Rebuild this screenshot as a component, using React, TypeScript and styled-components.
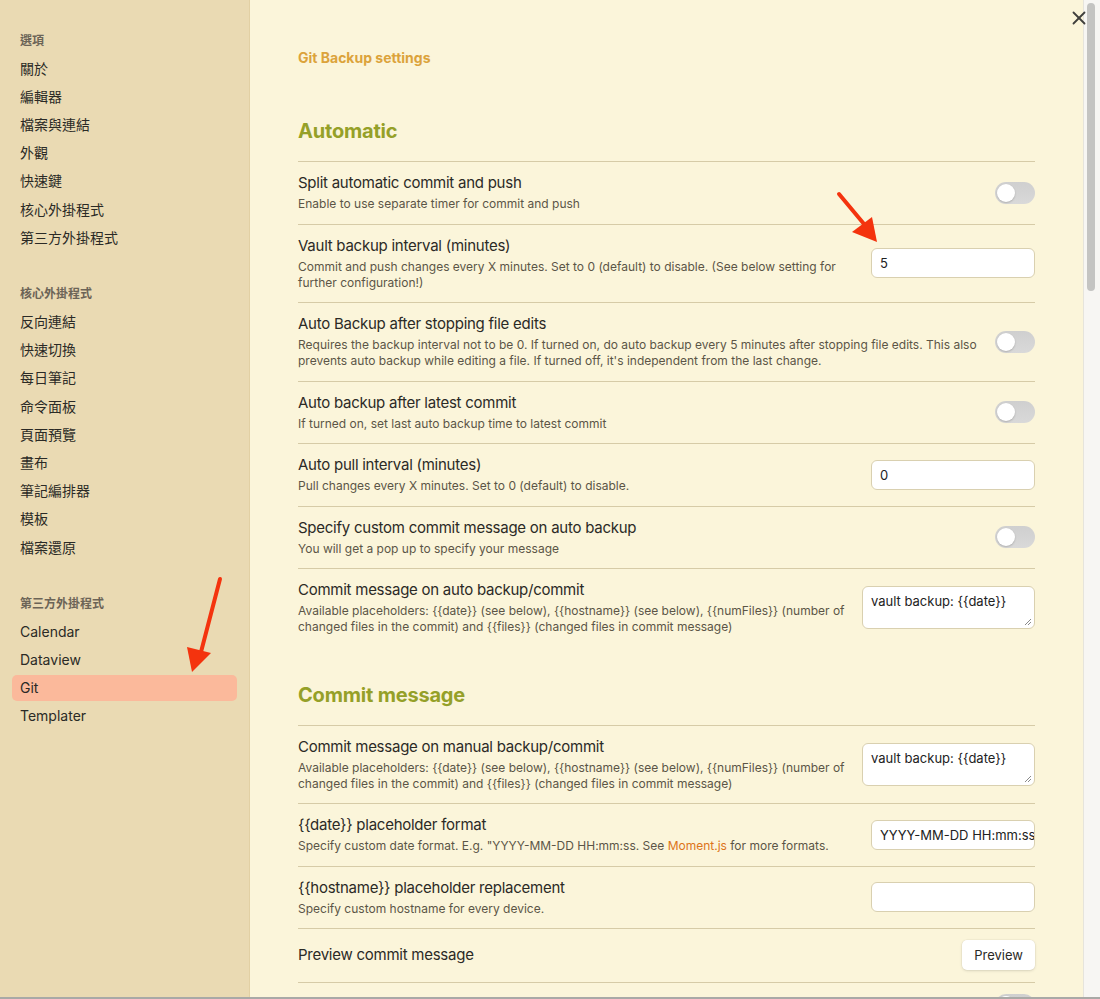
import React from "react";
import styled, { createGlobalStyle } from "styled-components";
import { X } from "lucide-react";

const GlobalStyle = createGlobalStyle`
  html, body { margin: 0; padding: 0; }
  body {
    font-family: Inter, "Noto Sans CJK TC", "Noto Sans", sans-serif;
    color: #2b2a26;
    background: #ffffff;
  }
  * { box-sizing: border-box; }
`;

const Window = styled.div`
  position: relative;
  display: flex;
  width: 1100px;
  height: 999px;
  overflow: hidden;
  border-bottom: 2px solid #a9a9a6;
`;

const Sidebar = styled.nav`
  flex: 0 0 250px;
  background: #eadab3;
  padding: 24.5px 12px 0 12px;
  border-right: 1px solid #e2d0a4;
`;

const NavGroup = styled.div`
  display: flex;
  flex-direction: column;
  margin-bottom: 25px;
`;

const NavHeading = styled.div`
  font-family: Inter, "Noto Sans CJK TC", sans-serif;
  font-size: 12px;
  font-weight: 600;
  line-height: 16px;
  padding: 8px 8px 7px;
  color: #6c6457;
`;

const NavItem = styled.div<{ $active?: boolean }>`
  font-family: Inter, "Noto Sans CJK TC", sans-serif;
  font-size: 14px;
  line-height: 18.2px;
  padding: 4px 8px;
  margin-bottom: 2px;
  border-radius: 5px;
  color: #2b2a26;
  background: ${(p) => (p.$active ? "#fbb99b" : "transparent")};
`;

const Main = styled.main`
  flex: 1;
  background: #fbf5da;
  padding: 48px 48px 0 48px;
  overflow: hidden;
`;

const PageTitle = styled.div`
  font-size: 14px;
  font-weight: 700;
  line-height: 20px;
  color: #dca33b;
  margin-bottom: 15px;
`;

const SectionHeading = styled.div`
  font-size: 20px;
  font-weight: 700;
  line-height: 26px;
  letter-spacing: -0.2px;
  color: #95a028;
  padding: 35px 0 17px;
`;

const Row = styled.div`
  display: flex;
  align-items: center;
  border-top: 1px solid #d6cba7;
  padding: 11.25px 0;
`;

const Info = styled.div`
  flex: 1;
  min-width: 0;
  margin-right: 16px;
`;

const Name = styled.div`
  font-size: 15px;
  line-height: 20px;
  letter-spacing: -0.25px;
  color: #2b2a26;
`;

const Desc = styled.div`
  font-size: 12px;
  line-height: 16px;
  margin-top: 3px;
  color: #5b5547;
`;

const Link = styled.span`
  color: #dd7419;
`;

const Toggle = styled.div`
  position: relative;
  flex: 0 0 40px;
  width: 40px;
  height: 22px;
  border-radius: 11px;
  background: linear-gradient(180deg, #cfcfcf, #d9d9d9);
  &::after {
    content: "";
    position: absolute;
    left: 2px;
    top: 2px;
    width: 18px;
    height: 18px;
    border-radius: 50%;
    background: #ffffff;
    box-shadow: 0 1px 2px rgba(0, 0, 0, 0.2);
  }
`;

const TextInput = styled.div`
  flex: 0 0 164px;
  width: 164px;
  height: 30px;
  background: #ffffff;
  border: 1px solid #d9d0b0;
  border-radius: 6px;
  padding: 0 8px;
  display: flex;
  align-items: center;
  font-size: 13px;
  color: #222;
  white-space: nowrap;
  overflow: hidden;
`;

const TextArea = styled.div`
  position: relative;
  flex: 0 0 173px;
  width: 173px;
  height: 43px;
  background: #ffffff;
  border: 1px solid #d9d0b0;
  border-radius: 6px;
  padding: 6px 8px;
  font-size: 13px;
  line-height: 16px;
  color: #222;
`;

const Grip = styled.svg`
  position: absolute;
  right: 2px;
  bottom: 2px;
`;

const Button = styled.div`
  flex: 0 0 auto;
  height: 30px;
  padding: 0 12px;
  display: flex;
  align-items: center;
  background: #ffffff;
  border-radius: 5px;
  font-size: 13px;
  color: #2b2a26;
  box-shadow: 0 1px 3px rgba(0, 0, 0, 0.12), 0 0 0 0.5px rgba(0, 0, 0, 0.05);
`;

const ScrollTrack = styled.div`
  flex: 0 0 17px;
  background: #f7f6f3;
  border-left: 1px solid #e6e4dc;
  padding: 3px 4px 0 3px;
`;

const ScrollThumb = styled.div`
  width: 8px;
  height: 288px;
  border-radius: 4px;
  background: #c4c4c2;
`;

const CloseButton = styled.div`
  position: absolute;
  top: 7px;
  right: 10px;
  color: #3f3f3c;
  display: flex;
`;

const Overlay = styled.svg`
  position: absolute;
  left: 0;
  top: 0;
  pointer-events: none;
`;

type Control =
  | { kind: "toggle" }
  | { kind: "input"; value: string }
  | { kind: "textarea"; value: string }
  | { kind: "button"; label: string };

type Setting = { name: string; desc?: React.ReactNode; control: Control };

const automatic: Setting[] = [
  {
    name: "Split automatic commit and push",
    desc: "Enable to use separate timer for commit and push",
    control: { kind: "toggle" },
  },
  {
    name: "Vault backup interval (minutes)",
    desc: "Commit and push changes every X minutes. Set to 0 (default) to disable. (See below setting for further configuration!)",
    control: { kind: "input", value: "5" },
  },
  {
    name: "Auto Backup after stopping file edits",
    desc: "Requires the backup interval not to be 0. If turned on, do auto backup every 5 minutes after stopping file edits. This also prevents auto backup while editing a file. If turned off, it's independent from the last change.",
    control: { kind: "toggle" },
  },
  {
    name: "Auto backup after latest commit",
    desc: "If turned on, set last auto backup time to latest commit",
    control: { kind: "toggle" },
  },
  {
    name: "Auto pull interval (minutes)",
    desc: "Pull changes every X minutes. Set to 0 (default) to disable.",
    control: { kind: "input", value: "0" },
  },
  {
    name: "Specify custom commit message on auto backup",
    desc: "You will get a pop up to specify your message",
    control: { kind: "toggle" },
  },
  {
    name: "Commit message on auto backup/commit",
    desc: "Available placeholders: {{date}} (see below), {{hostname}} (see below), {{numFiles}} (number of changed files in the commit) and {{files}} (changed files in commit message)",
    control: { kind: "textarea", value: "vault backup: {{date}}" },
  },
];

const commitMessage: Setting[] = [
  {
    name: "Commit message on manual backup/commit",
    desc: "Available placeholders: {{date}} (see below), {{hostname}} (see below), {{numFiles}} (number of changed files in the commit) and {{files}} (changed files in commit message)",
    control: { kind: "textarea", value: "vault backup: {{date}}" },
  },
  {
    name: "{{date}} placeholder format",
    desc: (
      <>
        Specify custom date format. E.g. "YYYY-MM-DD HH:mm:ss. See <Link>Moment.js</Link> for more formats.
      </>
    ),
    control: { kind: "input", value: "YYYY-MM-DD HH:mm:ss" },
  },
  {
    name: "{{hostname}} placeholder replacement",
    desc: "Specify custom hostname for every device.",
    control: { kind: "input", value: "" },
  },
  {
    name: "Preview commit message",
    control: { kind: "button", label: "Preview" },
  },
  {
    name: "List filenames affected by commit in the commit body",
    control: { kind: "toggle" },
  },
];

const navGroups: { heading: string; items: string[] }[] = [
  {
    heading: "選項",
    items: ["關於", "編輯器", "檔案與連結", "外觀", "快速鍵", "核心外掛程式", "第三方外掛程式"],
  },
  {
    heading: "核心外掛程式",
    items: ["反向連結", "快速切換", "每日筆記", "命令面板", "頁面預覽", "畫布", "筆記編排器", "模板", "檔案還原"],
  },
  {
    heading: "第三方外掛程式",
    items: ["Calendar", "Dataview", "Git", "Templater"],
  },
];

function ControlView({ control }: { control: Control }) {
  switch (control.kind) {
    case "toggle":
      return <Toggle />;
    case "input":
      return <TextInput>{control.value}</TextInput>;
    case "textarea":
      return (
        <TextArea>
          {control.value}
          <Grip width="8" height="8" viewBox="0 0 8 8">
            <path d="M7 1 L1 7 M7 4 L4 7" stroke="#8a8a8a" strokeWidth="1" fill="none" />
          </Grip>
        </TextArea>
      );
    case "button":
      return <Button>{control.label}</Button>;
  }
}

function SettingRow({ s }: { s: Setting }) {
  return (
    <Row>
      <Info>
        <Name>{s.name}</Name>
        {s.desc && <Desc>{s.desc}</Desc>}
      </Info>
      <ControlView control={s.control} />
    </Row>
  );
}

export default function App() {
  return (
    <>
      <GlobalStyle />
      <Window>
        <Sidebar>
          {navGroups.map((g) => (
            <NavGroup key={g.heading}>
              <NavHeading>{g.heading}</NavHeading>
              {g.items.map((it) => (
                <NavItem key={it} $active={it === "Git"}>
                  {it}
                </NavItem>
              ))}
            </NavGroup>
          ))}
        </Sidebar>
        <Main>
          <PageTitle>Git Backup settings</PageTitle>
          <SectionHeading>Automatic</SectionHeading>
          {automatic.map((s) => (
            <SettingRow key={s.name} s={s} />
          ))}
          <SectionHeading>Commit message</SectionHeading>
          {commitMessage.map((s) => (
            <SettingRow key={s.name} s={s} />
          ))}
        </Main>
        <ScrollTrack>
          <ScrollThumb />
        </ScrollTrack>
        <CloseButton>
          <X size={22} strokeWidth={2} />
        </CloseButton>
        <Overlay width="1100" height="999" viewBox="0 0 1100 999">
          <line x1="839" y1="194" x2="864" y2="224" stroke="#f4330e" strokeWidth="4" strokeLinecap="round" />
          <polygon points="877,242 852,232 872,217" fill="#f4330e" />
          <line x1="220" y1="579" x2="201" y2="652" stroke="#f4330e" strokeWidth="4" strokeLinecap="round" />
          <polygon points="192,672 187,647 211,653" fill="#f4330e" />
        </Overlay>
      </Window>
    </>
  );
}
